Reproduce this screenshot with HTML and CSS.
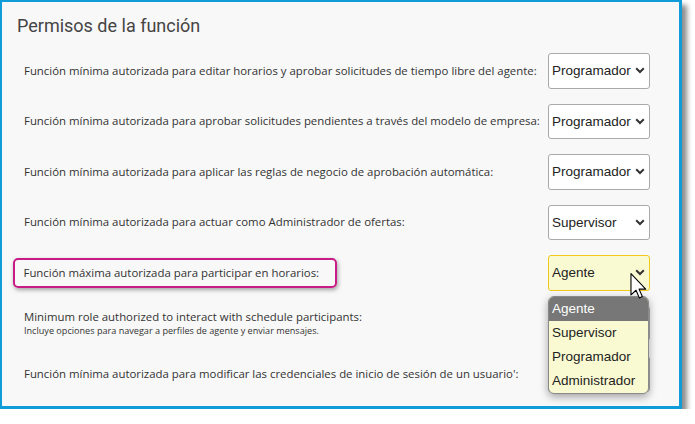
FILE: index.html
```html
<!DOCTYPE html>
<html lang="es">
<head>
<meta charset="utf-8">
<link rel="stylesheet" href="styles.css">
</head>
<body>
<div class="frame">
  <h1 class="title">Permisos de la función</h1>
  <div class="rows">
    <div class="row">
      <div class="label">Función mínima autorizada para editar horarios y aprobar solicitudes de tiempo libre del agente:</div>
      <div class="select"><span>Programador</span><svg class="chev" width="10" height="7" viewBox="0 0 10 7"><path d="M1.2 1.3 L5 5 L8.8 1.3" fill="none" stroke="#333" stroke-width="2"/></svg></div>
    </div>
    <div class="row">
      <div class="label">Función mínima autorizada para aprobar solicitudes pendientes a través del modelo de empresa:</div>
      <div class="select"><span>Programador</span><svg class="chev" width="10" height="7" viewBox="0 0 10 7"><path d="M1.2 1.3 L5 5 L8.8 1.3" fill="none" stroke="#333" stroke-width="2"/></svg></div>
    </div>
    <div class="row">
      <div class="label">Función mínima autorizada para aplicar las reglas de negocio de aprobación automática:</div>
      <div class="select"><span>Programador</span><svg class="chev" width="10" height="7" viewBox="0 0 10 7"><path d="M1.2 1.3 L5 5 L8.8 1.3" fill="none" stroke="#333" stroke-width="2"/></svg></div>
    </div>
    <div class="row">
      <div class="label">Función mínima autorizada para actuar como Administrador de ofertas:</div>
      <div class="select"><span>Supervisor</span><svg class="chev" width="10" height="7" viewBox="0 0 10 7"><path d="M1.2 1.3 L5 5 L8.8 1.3" fill="none" stroke="#333" stroke-width="2"/></svg></div>
    </div>
    <div class="row">
      <div class="label highlight">Función máxima autorizada para participar en horarios:</div>
      <div class="select active"><span>Agente</span><svg class="chev" width="10" height="7" viewBox="0 0 10 7"><path d="M1.2 1.3 L5 5 L8.8 1.3" fill="none" stroke="#333" stroke-width="2"/></svg>
        <svg class="cursor" width="17" height="26" viewBox="0 0 12 19"><path d="M0.5 0.5 L0.5 16 L4.2 12.6 L6.6 18.2 L8.8 17.2 L6.4 11.8 L11.3 11.8 Z" fill="#fff" stroke="#000" stroke-width="0.8" stroke-linejoin="round"/></svg>
        <div class="dropdown">
          <div class="opt sel">Agente</div>
          <div class="opt">Supervisor</div>
          <div class="opt">Programador</div>
          <div class="opt">Administrador</div>
        </div>
      </div>
    </div>
    <div class="row">
      <div class="label">Minimum role authorized to interact with schedule participants:<div class="sub">Incluye opciones para navegar a perfiles de agente y enviar mensajes.</div></div>
      <div class="select"></div>
    </div>
    <div class="row">
      <div class="label">Función mínima autorizada para modificar las credenciales de inicio de sesión de un usuario':</div>
      <div class="select"></div>
    </div>
    <div class="row">
      <div class="label"></div>
      <div class="select"></div>
    </div>
  </div>
</div>
</body>
</html>
```

FILE: styles.css
```css
html, body {
  margin: 0;
  padding: 0;
  background: #ffffff;
}
.frame {
  width: 677px;
  height: 404px;
  border-style: solid;
  border-color: #109bd9;
  border-width: 2px 3px 3px 2px;
  background: #f8f8f8;
  box-shadow: 5px 5px 5px rgba(0,0,0,0.45);
  overflow: hidden;
  position: relative;
}
.title {
  margin: 0;
  padding: 12px 0 0 15px;
  height: 31.5px;
  font-family: Roboto, "Liberation Sans", sans-serif;
  font-weight: 400;
  font-size: 18px;
  line-height: 24px;
  color: #444444;
}
.rows {
  display: flex;
  flex-direction: column;
}
.row {
  display: flex;
  align-items: center;
  height: 50.5px;
  padding: 0 29px 0 22px;
  flex: none;
}
.label {
  flex: 1 1 auto;
  min-width: 0;
  font-family: "Open Sans", "Liberation Sans", sans-serif;
  font-size: 11.4px;
  color: #333333;
  line-height: 16px;
  white-space: nowrap;
}
.label.highlight {
  flex: none;
  border: 2.5px solid #c81b86;
  border-radius: 5px;
  padding: 5px 16px 5px 9px;
  margin-left: -11.5px;
  box-shadow: 1px 2px 4px rgba(0,0,0,0.35);
}
.sub {
  font-size: 9.1px;
  line-height: 12px;
  color: #333;
}
.select {
  position: relative;
  flex: none;
  margin-left: auto;
  width: 97px;
  height: 33.5px;
  border: 1px solid #a9a9a9;
  border-radius: 3px;
  background: #ffffff;
  display: flex;
  align-items: center;
  font-family: "Liberation Sans", Arial, sans-serif;
  font-size: 13.5px;
  color: #222;
  padding-left: 3px;
  box-sizing: content-box;
}
.select span {
  flex: 1;
}
.chev {
  margin-right: 4px;
}
.select.active {
  background: #fafad2;
  border-color: #f2c81d;
}
.cursor {
  position: absolute;
  left: 81px;
  top: 17px;
  z-index: 3;
}
.dropdown {
  position: absolute;
  left: -1px;
  top: 40px;
  width: 99px;
  border: 1px solid #8a8a8a;
  border-radius: 6px;
  background: #fafad2;
  box-shadow: 0 3px 8px rgba(0,0,0,0.35);
  overflow: hidden;
  z-index: 2;
}
.opt {
  height: 24px;
  line-height: 24px;
  padding-left: 3px;
  font-family: "Liberation Sans", Arial, sans-serif;
  font-size: 13.5px;
  color: #222;
}
.opt.sel {
  background: #777777;
  color: #ffffff;
}
```
